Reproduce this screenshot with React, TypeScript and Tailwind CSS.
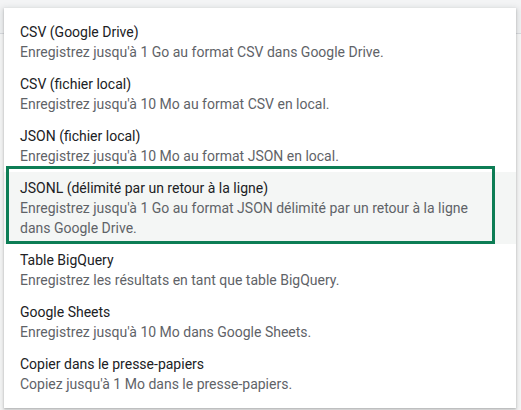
import React from 'react';

interface ExportOption {
  title: string;
  description: string;
  active?: boolean;
}

const options: ExportOption[] = [
  { title: 'CSV (Google Drive)', description: "Enregistrez jusqu'à 1 Go au format CSV dans Google Drive." },
  { title: 'CSV (fichier local)', description: "Enregistrez jusqu'à 10 Mo au format CSV en local." },
  { title: 'JSON (fichier local)', description: "Enregistrez jusqu'à 10 Mo au format JSON en local." },
  {
    title: 'JSONL (délimité par un retour à la ligne)',
    description: "Enregistrez jusqu'à 1 Go au format JSON délimité par un retour à la ligne dans Google Drive.",
    active: true,
  },
  { title: 'Table BigQuery', description: 'Enregistrez les résultats en tant que table BigQuery.' },
  { title: 'Google Sheets', description: "Enregistrez jusqu'à 10 Mo dans Google Sheets." },
  { title: 'Copier dans le presse-papiers', description: "Copiez jusqu'à 1 Mo dans le presse-papiers." },
];

const App: React.FC = () => {
  return (
    <div className="relative h-[410px] w-[521px] overflow-hidden bg-[#fafafa] font-['Roboto',sans-serif]">
      {/* page behind the menu */}
      <div className="h-[34px] border-b border-[#dadce0] bg-[#f3f4f5]" />

      <div className="absolute left-[4px] top-[8px] w-[512px] bg-white py-2 shadow-[0_2px_6px_2px_rgba(60,64,67,0.15),0_1px_2px_rgba(60,64,67,0.3)]">
        {options.map((option) => (
          <div
            key={option.title}
            className={`relative px-4 py-[6px] text-[14px] leading-5 ${option.active ? 'bg-[#f4f6f5]' : ''}`}
          >
            <div className="text-[#202124]">{option.title}</div>
            <div className="pr-4 text-[#5f6368]">{option.description}</div>
            {option.active && (
              <div className="pointer-events-none absolute -top-[6px] bottom-0 left-[2px] right-[21px] border-[3px] border-[#0d7d55]" />
            )}
          </div>
        ))}
      </div>
    </div>
  );
};

export default App;
